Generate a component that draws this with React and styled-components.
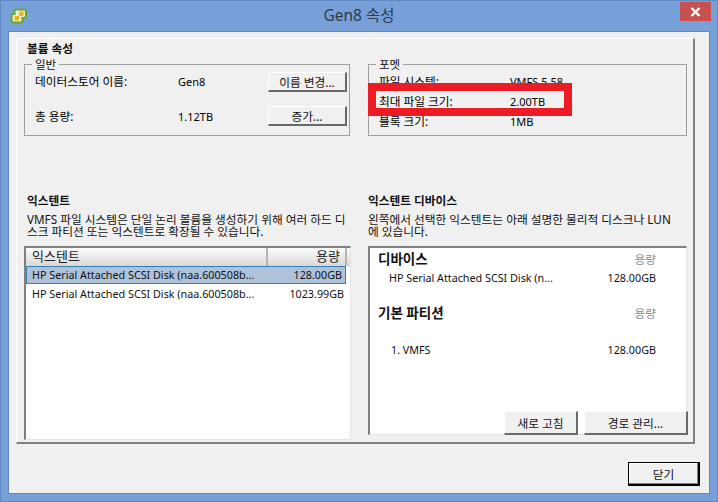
import React from 'react';
import styled, { createGlobalStyle } from 'styled-components';

const Global = createGlobalStyle`
  html, body { margin: 0; padding: 0; background: #78a0d8; }
  * { box-sizing: border-box; }
`;
const FONT = `"Noto Sans", "Noto Sans CJK KR", sans-serif`;
const Window = styled.div`
  width: 718px; height: 502px; background: #78a0d8; border: 1px solid #6088c4;
  display: flex; flex-direction: column; overflow: hidden;
  font-family: ${FONT}; font-size: 11.7px; color: #000;
`;
const TitleBar = styled.div`
  height: 30px; flex: none; display: flex; align-items: center; position: relative; justify-content: center;
`;
const Logo = styled.svg`position: absolute; left: 9px; top: 6px;`;
const Title = styled.div`
  font-size: 15.5px; color: #303a4a; padding-bottom: 3px;
`;
const CloseBtn = styled.div`
  position: absolute; right: 6px; top: 1px; width: 31px; height: 19px; background: #c75050;
  display: flex; align-items: center; justify-content: center;
`;
const Client = styled.div`
  margin: 0 7px 7px; flex: 1; background: #f0f0f0; border: 1px solid #5f86c0; padding: 6px 9px 0 7px;
  display: flex; flex-direction: column;
`;
const Panel = styled.div`
  height: 406px; flex: none; margin-right: 5px; border: 1px solid #fff; border-right: 2px solid #808080; border-bottom: 2px solid #808080;
  padding: 2px 8px 0 7px; display: grid; grid-template-columns: 326px 319px; column-gap: 18px;
  grid-template-rows: 152px 1fr;
`;
const Section = styled.div`display: flex; flex-direction: column; position: relative; min-width: 0;`;
const Heading = styled.div`
  font-weight: 700; font-size: 11.7px; height: 15px; line-height: 15px; margin-left: ${p => p.$indent ?? 3}px; color: #111;
`;
const Box = styled.fieldset`
  margin: 2px 0 0; padding: 0; border: 1px solid #a0a0a0; position: relative; height: 78px;
  min-width: 0;
`;
const Legend = styled.legend`
  margin-left: 7px; padding: 0 3px; font-size: 11.5px; line-height: 13px; color: #111;
`;
const GeneralGrid = styled.div`
  display: grid; grid-template-columns: 143px 90px 79px; grid-template-rows: 25px 24px; row-gap: 10px;
  padding-left: 10px; align-items: center; margin-top: -2px;
`;
const FormatGrid = styled.div`
  display: grid; grid-template-columns: 131px 1fr; grid-auto-rows: 20px; padding-left: 10px; align-items: center;
`;
const Cell = styled.div`white-space: nowrap; line-height: 13px; font-size: ${p => (p.$value ? '11px' : '11.7px')};`;
const Btn = styled.div`
  background: #f0f0f0; border: 1px solid #fff; border-right: 2px solid #696969; border-bottom: 2px solid #696969;
  display: flex; align-items: center; justify-content: center; white-space: nowrap; color: #111;
`;
const RedMark = styled.div`
  position: absolute; left: -1px; top: 12px; width: 204px; height: 33px; border: 8px solid #ed1c24; pointer-events: none;
`;
const Desc = styled.div`
  margin: 5px 0 0 ${p => p.$indent ?? 3}px; line-height: 12px; height: 33px; white-space: pre; color: #111;
`;
const Inset = styled.div`
  height: ${p => p.$h}px; width: ${p => p.$w}px; flex: none; border-top: 2px solid #808080; border-left: 2px solid #808080;
  border-right: 1px solid #e4e4e4; border-bottom: 1px solid #e4e4e4; background: #fff;
`;
const ListHead = styled.div`
  height: 18px; width: 324px; display: grid; grid-template-columns: 242px 79px 1fr; background: linear-gradient(#fcfcfc, #d8d8d8); font-size: 13px;
  line-height: 17px;
`;
const HeadCol = styled.div`
  padding: 0 ${p => (p.$right ? '5px' : '0')} 0 ${p => (p.$right ? '0' : '6px')};
  text-align: ${p => (p.$right ? 'right' : 'left')};
  border-right: ${p => (p.$end ? 'none' : '2px solid #b4b4b4')}; color: #222;
`;
const ListRow = styled.div`
  height: ${p => (p.$selected ? '18px' : '19px')}; width: 320px;
  display: flex; justify-content: space-between; align-items: center; padding: 0 3px 0 5px;
  background: ${p => (p.$selected ? '#aec2da' : 'transparent')};
  border: ${p => (p.$selected ? '1px solid #3d7cb0' : 'none')};
  font-size: 10.75px; white-space: nowrap; color: #111;
  margin-left: ${p => (p.$selected ? '0' : '1px')};
`;
const DetailsBody = styled.div`padding: 0 30px 0 8px; display: flex; flex-direction: column;`;
const DetailHead = styled.div`
  display: flex; justify-content: space-between; align-items: center; height: 20px;
  margin-top: ${p => p.$top ?? 0}px; font-weight: 700; font-size: 13.5px; color: #111;
`;
const Muted = styled.span`font-weight: 400; font-size: 11.7px; color: #8c8c8c;`;
const DetailRow = styled.div`
  display: flex; justify-content: space-between; align-items: center; height: 20px;
  padding-left: ${p => p.$indent}px; margin-top: ${p => p.$top || 0}px; font-size: 10.75px;
  white-space: nowrap; color: #111;
`;
const FloatButtons = styled.div`
  position: absolute; right: -1px; top: 218px; display: flex; gap: 6px; height: 24px;
`;
const FloatBtn = styled(Btn)`width: ${p => p.$w}px;`;
const Footer = styled.div`display: flex; justify-content: flex-end; padding-top: 18px;`;
const CloseDialog = styled.div`
  width: 72px; height: 24px; border: 1px solid #000; border-right: 2px solid #000; border-bottom: 2px solid #000;
  box-shadow: inset -1px -1px 0 #808080, inset 1px 1px 0 #fff;
  display: flex; align-items: center; justify-content: center; color: #111;
`;

export default function App() {
  return (
    <Window>
      <Global />
      <TitleBar>
        <Logo width="18" height="18" viewBox="0 0 18 18">
          <path d="M6 2.500 H14 Q16 2.500 16 4.500 V9 Q16 11 14 11 H12.500 V13.500 Q12.500 15.500 10.500 15.500 H3.500 Q1.500 15.500 1.500 13.500 V9 Q1.500 7 3.500 7 H4.500 V4 Q4.500 2.500 6 2.500 Z" fill="#e8efe0" stroke="#6aa52c" strokeWidth="2" />
          <rect x="9" y="4.500" width="4.500" height="4.500" fill="#f2b21a" />
          <rect x="4.500" y="9" width="4.500" height="4.500" fill="#f2b21a" />
        </Logo>
        <Title>Gen8 속성</Title>
        <CloseBtn>
          <svg width="11" height="10" viewBox="0 0 11 10"><path d="M1.500 1 L9.500 9 M9.500 1 L1.500 9" stroke="#fff" strokeWidth="2.400" /></svg>
        </CloseBtn>
      </TitleBar>
      <Client>
        <Panel>
          <Section>
            <Heading>볼륨 속성</Heading>
            <Box>
              <Legend>일반</Legend>
              <GeneralGrid>
                <Cell>데이터스토어 이름:</Cell>
                <Cell $value>Gen8</Cell>
                <Btn>이름 변경...</Btn>
                <Cell>총 용량:</Cell>
                <Cell $value>1.12TB</Cell>
                <Btn>증가...</Btn>
              </GeneralGrid>
            </Box>
          </Section>
          <Section>
            <Heading>&nbsp;</Heading>
            <Box>
              <Legend>포멧</Legend>
              <FormatGrid>
                <Cell>파일 시스템:</Cell>
                <Cell $value>VMFS 5.58</Cell>
                <Cell>최대 파일 크기:</Cell>
                <Cell $value>2.00TB</Cell>
                <Cell>블록 크기:</Cell>
                <Cell $value>1MB</Cell>
              </FormatGrid>
              <RedMark />
            </Box>
          </Section>
          <Section>
            <Heading>익스텐트</Heading>
            <Desc>{'VMFS 파일 시스템은 단일 논리 볼륨을 생성하기 위해 여러 하드 디\n스크 파티션 또는 익스텐트로 확장될 수 있습니다.'}</Desc>
            <Inset $w={327} $h={194}>
              <ListHead>
                <HeadCol>익스텐트</HeadCol>
                <HeadCol $right>용량</HeadCol>
                <HeadCol $end />
              </ListHead>
              <ListRow $selected>
                <span>HP Serial Attached SCSI Disk (naa.600508b...</span>
                <span>128.00GB</span>
              </ListRow>
              <ListRow>
                <span>HP Serial Attached SCSI Disk (naa.600508b...</span>
                <span>1023.99GB</span>
              </ListRow>
            </Inset>
          </Section>
          <Section>
            <Heading $indent={0}>익스텐트 디바이스</Heading>
            <Desc $indent={0}>{'왼쪽에서 선택한 익스텐트는 아래 설명한 물리적 디스크나 LUN\n에 있습니다.'}</Desc>
            <Inset $w={319} $h={189}>
              <DetailsBody>
                <DetailHead>디바이스<Muted>용량</Muted></DetailHead>
                <DetailRow $indent={11}><span>HP Serial Attached SCSI Disk (n...</span><span>128.00GB</span></DetailRow>
                <DetailHead $top={14}>기본 파티션<Muted>용량</Muted></DetailHead>
                <DetailRow $indent={13} $top={18}><span>1. VMFS</span><span>128.00GB</span></DetailRow>
              </DetailsBody>
            </Inset>
            <FloatButtons>
              <FloatBtn $w={74}>새로 고침</FloatBtn>
              <FloatBtn $w={104}>경로 관리...</FloatBtn>
            </FloatButtons>
          </Section>
        </Panel>
        <Footer><CloseDialog>닫기</CloseDialog></Footer>
      </Client>
    </Window>
  );
}
